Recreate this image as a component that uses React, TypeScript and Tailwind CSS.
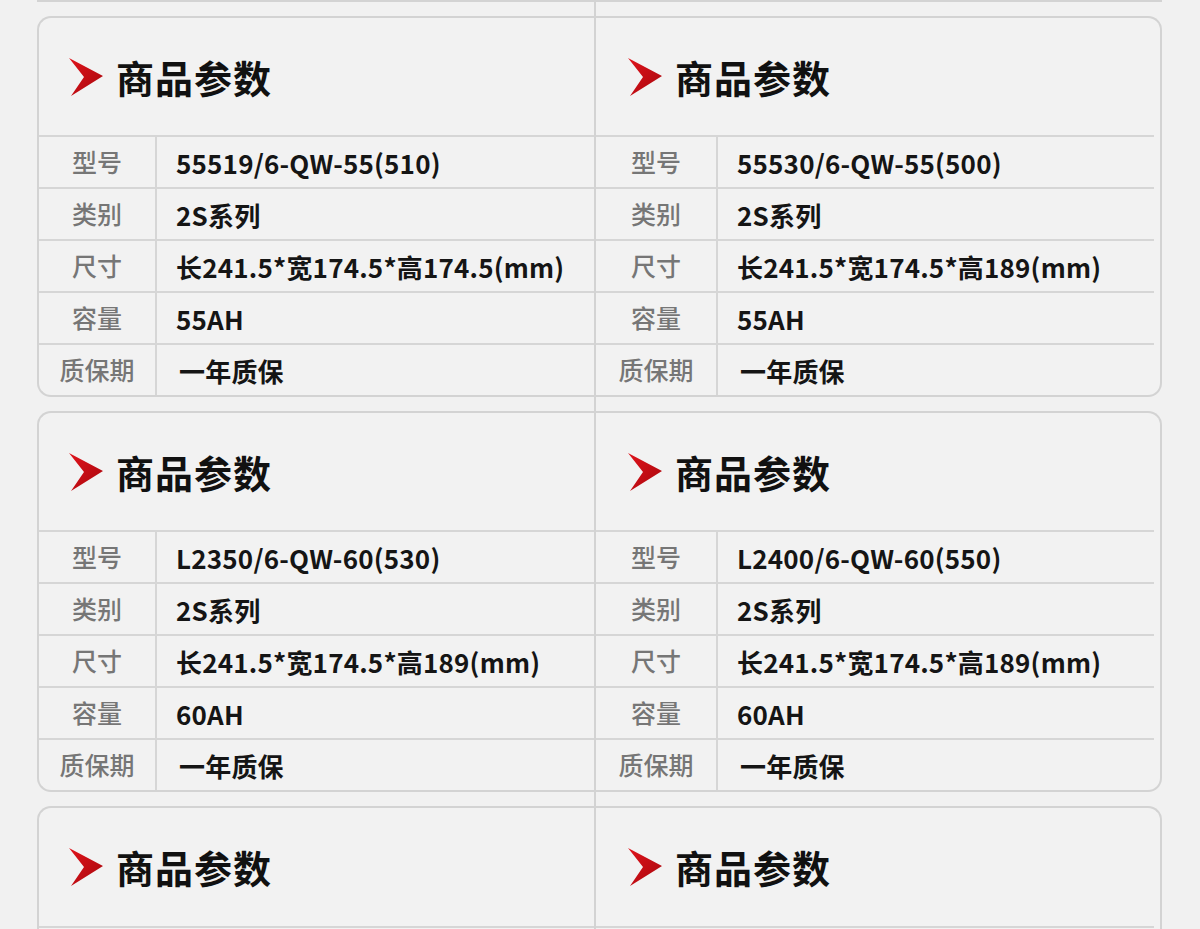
import React from 'react';

type Spec = {
  model: string;
  series: string;
  size: string;
  capacity: string;
  warranty: string;
};

const rows: { left: Spec; right: Spec }[] = [
  {
    left: { model: '55519/6-QW-55(510)', series: '2S系列', size: '长241.5*宽174.5*高174.5(mm)', capacity: '55AH', warranty: '一年质保' },
    right: { model: '55530/6-QW-55(500)', series: '2S系列', size: '长241.5*宽174.5*高189(mm)', capacity: '55AH', warranty: '一年质保' },
  },
  {
    left: { model: 'L2350/6-QW-60(530)', series: '2S系列', size: '长241.5*宽174.5*高189(mm)', capacity: '60AH', warranty: '一年质保' },
    right: { model: 'L2400/6-QW-60(550)', series: '2S系列', size: '长241.5*宽174.5*高189(mm)', capacity: '60AH', warranty: '一年质保' },
  },
];

const font = { fontFamily: '"Noto Sans CJK SC", "Noto Sans", sans-serif' };

function RedArrow() {
  return (
    <svg width="36" height="40" viewBox="0 0 36 40" className="shrink-0">
      <defs>
        <linearGradient id="ra" x1="0" y1="0" x2="1" y2="1">
          <stop offset="0" stopColor="#e0141c" />
          <stop offset="1" stopColor="#a8070d" />
        </linearGradient>
      </defs>
      <polygon points="1,1 35,19 3,39 16,20" fill="url(#ra)" />
    </svg>
  );
}

function CardHeader({ isLeft, last }: { isLeft: boolean; last?: boolean }) {
  return (
    <div
      className={`flex h-[119px] shrink-0 items-center gap-[12px] border-b-2 border-[#d6d6d6] ${isLeft ? 'pl-[29px]' : 'pl-[31px]'} ${
        last ? 'h-[120px]' : ''
      }`}
    >
      <RedArrow />
      <span className="text-[38px] font-bold leading-none tracking-[1px] text-[#111]">商品参数</span>
    </div>
  );
}

function ParamCard({ spec, side }: { spec: Spec; side: 'left' | 'right' }) {
  const isLeft = side === 'left';
  const items: [string, string][] = [
    ['型号', spec.model],
    ['类别', spec.series],
    ['尺寸', spec.size],
    ['容量', spec.capacity],
    ['质保期', spec.warranty],
  ];

  return (
    <div
      className={`flex h-[381px] flex-col border-y-2 border-[#d3d3d3] bg-[#f2f2f2] ${
        isLeft ? 'rounded-l-[14px] border-l-2' : 'rounded-r-[14px] border-r-2 pr-[6px]'
      }`}
    >
      <CardHeader isLeft={isLeft} />
      {items.map(([label, value], i) => (
        <div
          key={label}
          className={`flex flex-1 items-center ${i < items.length - 1 ? 'border-b-2 border-[#d6d6d6]' : ''}`}
        >
          <div
            className={`flex h-full items-center justify-center border-r-2 border-[#d6d6d6] text-[25px] font-medium text-[#767676] ${
              isLeft ? 'w-[118px]' : 'w-[122px]'
            }`}
          >
            {label}
          </div>
          <div
            className={`text-[26px] font-semibold tracking-[0.2px] text-[#151515] ${
              i === items.length - 1 ? 'pl-[22px]' : 'pl-[19px]'
            }`}
          >
            {value}
          </div>
        </div>
      ))}
    </div>
  );
}

// the next card only shows its heading before the page edge
function PartialCard({ side }: { side: 'left' | 'right' }) {
  const isLeft = side === 'left';
  return (
    <div
      className={`flex flex-col border-t-2 border-[#d3d3d3] bg-[#f2f2f2] ${
        isLeft ? 'rounded-tl-[14px] border-l-2' : 'rounded-tr-[14px] border-r-2 pr-[6px]'
      }`}
    >
      <CardHeader isLeft={isLeft} last />
      <div className="h-[6px]" />
    </div>
  );
}

export default function App() {
  return (
    <div className="min-h-screen overflow-hidden bg-[#f1f1f1]" style={font}>
      <div className="flex pl-[37px]">
        <div className="flex w-[557px] flex-col gap-[14px]">
          <div className="h-[2px] border-b-2 border-[#d3d3d3]" />
          {rows.map((r, i) => (
            <ParamCard key={i} spec={r.left} side="left" />
          ))}
          <PartialCard side="left" />
        </div>
        <div className="flex w-[568px] flex-col gap-[14px] border-l-2 border-[#d3d3d3]">
          <div className="h-[2px] border-b-2 border-[#d3d3d3]" />
          {rows.map((r, i) => (
            <ParamCard key={i} spec={r.right} side="right" />
          ))}
          <PartialCard side="right" />
        </div>
      </div>
    </div>
  );
}
